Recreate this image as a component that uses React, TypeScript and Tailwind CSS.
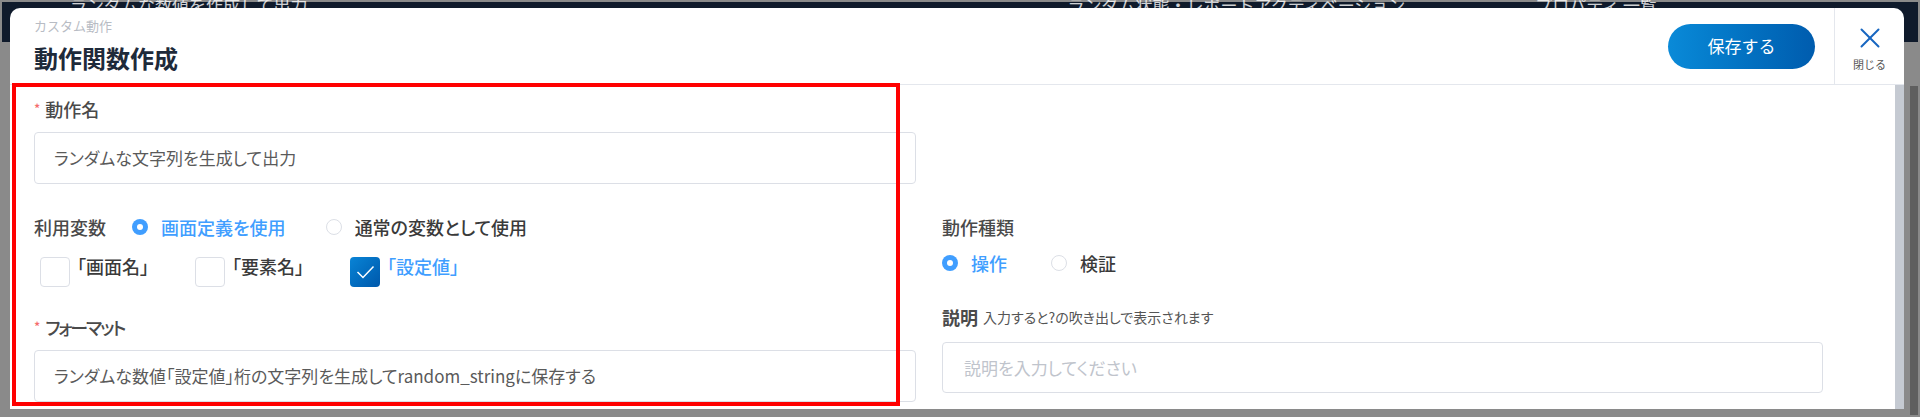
import { X } from "lucide-react";

const jp = { fontFamily: '"Noto Sans CJK JP", "Noto Sans", sans-serif' };

function Radio({ checked, label }: { checked: boolean; label: string }) {
  return (
    <label className="flex items-center gap-[13px]">
      {checked ? (
        <span className="flex h-[16px] w-[16px] items-center justify-center rounded-full bg-[#409eff]">
          <span className="h-[6px] w-[6px] rounded-full bg-white" />
        </span>
      ) : (
        <span className="h-[16px] w-[16px] rounded-full border border-[#dcdfe6] bg-white" />
      )}
      <span className={`text-[18px] font-medium ${checked ? "text-[#409eff]" : "text-[#3a3a3a]"}`}>{label}</span>
    </label>
  );
}

function Check({ checked, label }: { checked: boolean; label: string }) {
  return (
    <label className="flex items-start gap-[7px]">
      {checked ? (
        <span className="flex h-[30px] w-[30px] items-center justify-center rounded-[4px] bg-gradient-to-br from-[#0a84d6] to-[#0058ab]">
          <svg width="19" height="14" viewBox="0 0 19 14" fill="none">
            <path d="M1.5 7 L7 12.5 L17.5 1.5" stroke="white" strokeWidth="1.5" />
          </svg>
        </span>
      ) : (
        <span className="h-[30px] w-[30px] rounded-[4px] border border-[#dcdfe6] bg-white" />
      )}
      <span className={`-mt-[4px] text-[18px] font-medium ${checked ? "text-[#409eff]" : "text-[#3a3a3a]"}`}>{label}</span>
    </label>
  );
}

function Label({ text, required, tight }: { text: string; required?: boolean; tight?: boolean }) {
  return (
    <div className="flex h-[24px] items-center text-[18px] font-medium text-[#4a4a4a]">
      {required && <span className="mr-[5px] text-[13px] text-[#f56c6c]">*</span>}
      <span className={tight ? "tracking-[-2px]" : ""}>{text}</span>
    </div>
  );
}

export default function App() {
  return (
    <div className="relative h-[417px] w-[1920px] overflow-hidden bg-[#8a8a8a]" style={jp}>
      {/* background app behind the dialog */}
      <div className="absolute left-[2px] right-[2px] top-[2px] h-[40px] bg-[#0f1a2b]">
        <div className="-mt-[10px] flex items-center text-[17px] text-white/80">
          <span className="ml-[68px]">ランダムな数値を作成して出力</span>
          <span className="ml-[760px]">ランダム状態・レポートアクティベーション</span>
          <span className="ml-[130px]">プロパティ 一覧</span>
        </div>
      </div>
      <div className="absolute bottom-[2px] right-[2px] top-[86px] w-[8px] bg-[#5f5f5f]" />

      {/* dialog */}
      <div className="absolute left-[10px] top-[8px] flex h-[401px] w-[1894px] flex-col overflow-hidden rounded-t-[10px] bg-white">
        <header className="flex h-[77px] items-stretch border-b border-[#e4e7ed]">
          <div className="flex flex-1 flex-col pl-[24px] pt-[8px]">
            <span className="text-[13px] leading-[20px] text-[#b8bcc4]">カスタム動作</span>
            <h1 className="mt-[6px] text-[24px] font-bold leading-[32px] text-[#1e2a3a]">動作関数作成</h1>
          </div>
          <div className="flex items-center pr-[19px]">
            <button className="h-[45px] w-[147px] rounded-full bg-gradient-to-r from-[#0a8ad8] to-[#005cae] text-[17px] text-white">
              保存する
            </button>
          </div>
          <div className="flex w-[70px] flex-col items-center border-l border-[#e4e7ed] pt-[13px]">
            <X className="h-[34px] w-[34px] text-[#1766c0]" strokeWidth={1.4} />
            <span className="mt-[1px] text-[11px] text-[#555]">閉じる</span>
          </div>
        </header>

        <div className="flex flex-1 [font-feature-settings:'palt']">
          <div className="flex flex-1 gap-[26px] pl-[24px]">
            {/* left column */}
            <div className="flex w-[882px] flex-col pt-[12px]">
              <Label text="動作名" required />
              <div className="mt-[11px] flex h-[52px] items-center rounded-[4px] border border-[#dcdfe6] px-[19px] text-[17px] text-[#5a5a5a]">
                ランダムな文字列を生成して出力
              </div>
              <div className="mt-[31px] flex h-[24px] items-center">
                <span className="mr-[26px] text-[18px] font-medium text-[#4a4a4a]">利用変数</span>
                <div className="flex items-center gap-[40px]">
                  <Radio checked label="画面定義を使用" />
                  <Radio checked={false} label="通常の変数として使用" />
                </div>
              </div>
              <div className="mt-[18px] flex h-[30px] gap-[46px] pl-[6px]">
                <Check checked={false} label="「画面名」" />
                <Check checked={false} label="「要素名」" />
                <Check checked label="「設定値」" />
              </div>
              <div className="mt-[28px]">
                <Label text="フォーマット" required tight />
              </div>
              <div className="mt-[11px] flex h-[52px] items-center rounded-[4px] border border-[#dcdfe6] px-[19px] text-[17px] text-[#5a5a5a]">
                ランダムな数値「設定値」桁の文字列を生成してrandom_stringに保存する
              </div>
            </div>

            {/* right column */}
            <div className="flex w-[881px] flex-col pt-[130px]">
              <div className="flex h-[24px] items-center text-[18px] font-medium text-[#4a4a4a]">動作種類</div>
              <div className="mt-[12px] flex h-[24px] items-center gap-[44px]">
                <Radio checked label="操作" />
                <Radio checked={false} label="検証" />
              </div>
              <div className="mt-[30px] flex h-[24px] items-center gap-[5px]">
                <span className="text-[18px] font-bold text-[#4a4a4a]">説明</span>
                <span className="text-[14px] text-[#555]">入力すると?の吹き出しで表示されます</span>
              </div>
              <div className="mt-[13px] flex h-[51px] items-center rounded-[4px] border border-[#dcdfe6] px-[21px] text-[17px] text-[#c0c4cc]">
                説明を入力してください
              </div>
            </div>
          </div>
          {/* scrollbar */}
          <div className="w-[9px] bg-[#c5cad2]" />
        </div>
      </div>

      {/* annotation frame */}
      <div className="absolute left-[12px] top-[83px] h-[323px] w-[888px] border-[4px] border-[#ff0000]" />
    </div>
  );
}
